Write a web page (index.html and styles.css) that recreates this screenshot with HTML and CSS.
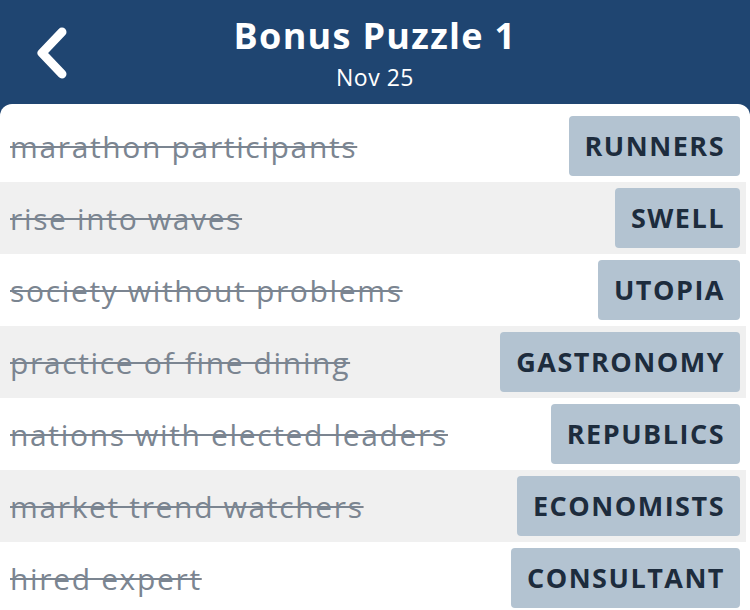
FILE: index.html
```html
<!DOCTYPE html>
<html lang="en">
<head>
  <meta charset="UTF-8">
  <meta name="viewport" content="width=device-width, initial-scale=1.0">
  <title>Bonus Puzzle 1</title>
  <link rel="stylesheet" href="styles.css">
</head>
<body>

<header class="topbar">
  <button class="back" aria-label="Back">
    <svg width="34" height="52" viewBox="0 0 34 52">
      <path d="M28 5 L8 26 L28 47" fill="none" stroke="#fff" stroke-width="9" stroke-linecap="round" stroke-linejoin="round"/>
    </svg>
  </button>
  <div class="titles">
    <h1>Bonus Puzzle 1</h1>
    <div class="date">Nov 25</div>
  </div>
</header>

<div class="card">
  <div class="row">
    <span class="clue">marathon participants</span>
    <span class="answer">RUNNERS</span>
  </div>
  <div class="row">
    <span class="clue">rise into waves</span>
    <span class="answer">SWELL</span>
  </div>
  <div class="row">
    <span class="clue">society without problems</span>
    <span class="answer">UTOPIA</span>
  </div>
  <div class="row">
    <span class="clue">practice of fine dining</span>
    <span class="answer">GASTRONOMY</span>
  </div>
  <div class="row">
    <span class="clue">nations with elected leaders</span>
    <span class="answer">REPUBLICS</span>
  </div>
  <div class="row">
    <span class="clue">market trend watchers</span>
    <span class="answer">ECONOMISTS</span>
  </div>
  <div class="row">
    <span class="clue">hired expert</span>
    <span class="answer">CONSULTANT</span>
  </div>
</div>

</body>
</html>
```

FILE: styles.css
```css
body {
  font-family: 'Open Sans', 'Noto Sans', sans-serif;
  background: #1f4571;
  margin: 0;
  padding: 0;
  height: 610px;
  overflow: hidden;
}
.topbar {
  position: relative;
  height: 104px;
  color: #fff;
  text-align: center;
}
.back {
  position: absolute;
  left: 34px;
  top: 27px;
  padding: 0;
  background: none;
  border: none;
}
.titles {
  padding-top: 12px;
}
h1 {
  margin: 0;
  font-size: 36px;
  font-weight: 700;
  line-height: 48px;
  letter-spacing: 1.3px;
}
.date {
  font-size: 23px;
  line-height: 34px;
  letter-spacing: 0.5px;
}
.card {
  background: #fff;
  border-radius: 12px 12px 0 0;
  padding-top: 6px;
  min-height: 506px;
}
.row {
  display: flex;
  align-items: center;
  justify-content: space-between;
  height: 72px;
  padding: 0 6px 0 10px;
  margin-right: 4px;
}
.row:nth-child(even) {
  background: #f0f0f0;
}
.clue {
  font-size: 30px;
  letter-spacing: 1.65px;
  color: #7b8591;
  text-decoration: line-through;
  text-decoration-thickness: 2px;
}
.answer {
  background: #b3c3d1;
  color: #1d2c3d;
  font-size: 27px;
  font-weight: 700;
  letter-spacing: 1.5px;
  height: 60px;
  line-height: 60px;
  padding: 0 15px 0 16px;
  border-radius: 4px;
}
```
